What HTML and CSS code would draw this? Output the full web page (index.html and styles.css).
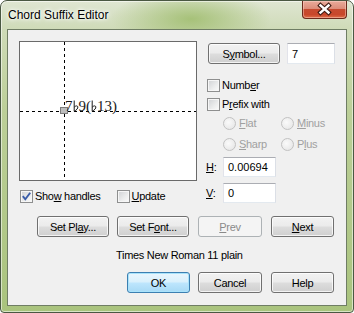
FILE: index.html
```html
<!DOCTYPE html>
<html lang="en">
<head>
  <meta charset="UTF-8">
  <title>Chord Suffix Editor</title>
  <link rel="stylesheet" href="styles.css">
</head>
<body>
  <div class="window">
    <!-- Title bar -->
    <div class="titlebar">
      <span class="title">Chord Suffix Editor</span>
      <div class="close-btn">
        <svg width="45" height="18" viewBox="0 0 45 18">
          <path d="M18.5 5.5 L26.5 12.5 M26.5 5.5 L18.5 12.5" stroke="#3e1c14" stroke-width="4.6" stroke-linecap="square" fill="none"/>
          <path d="M18.5 5.5 L26.5 12.5 M26.5 5.5 L18.5 12.5" stroke="#ffffff" stroke-width="2.4" stroke-linecap="square" fill="none"/>
        </svg>
      </div>
    </div>

    <!-- Dialog body -->
    <div class="client">
      <div class="top-section">
        <div class="left-col">
          <div class="preview">
            <div class="guide-v"></div>
            <div class="guide-h"></div>
            <div class="handle"></div>
            <div class="suffix">7<svg class="flat" width="6" height="12" viewBox="0 0 6 12"><path d="M1.2 0.5 V11.3 C3.5 10 5.2 8.4 4.8 6.8 C4.4 5.4 2.6 5.6 1.2 7.2" stroke="#1a1a1a" stroke-width="1" fill="none"/></svg>9(<svg class="flat" width="6" height="12" viewBox="0 0 6 12"><path d="M1.2 0.5 V11.3 C3.5 10 5.2 8.4 4.8 6.8 C4.4 5.4 2.6 5.6 1.2 7.2" stroke="#1a1a1a" stroke-width="1" fill="none"/></svg>13)</div>
          </div>
          <div class="checks-row">
            <div class="check">
              <span class="box">
                <svg width="11" height="11" viewBox="0 0 11 11"><path d="M1.8 5.2 L4.3 8.3 L9.2 1.8" stroke="#3a5ca8" stroke-width="1.9" fill="none"/></svg>
              </span>
              <span>Sho<u>w</u> handles</span>
            </div>
            <div class="check update-check">
              <span class="box"></span>
              <span><u>U</u>pdate</span>
            </div>
          </div>
        </div>

        <div class="right-col">
          <div class="symbol-row">
            <div class="btn symbol-btn">S<u>y</u>mbol...</div>
            <div class="field symbol-field">7</div>
          </div>
          <div class="check number-check">
            <span class="box"></span>
            <span>Numb<u>e</u>r</span>
          </div>
          <div class="check prefix-check">
            <span class="box"></span>
            <span>P<u>r</u>efix with</span>
          </div>
          <div class="radio-row first">
            <div class="radio"><span class="dot"></span><span><u>F</u>lat</span></div>
            <div class="radio"><span class="dot"></span><span><u>M</u>inus</span></div>
          </div>
          <div class="radio-row second">
            <div class="radio"><span class="dot"></span><span><u>S</u>harp</span></div>
            <div class="radio"><span class="dot"></span><span>P<u>l</u>us</span></div>
          </div>
          <div class="coord-row h-row">
            <span class="coord-label"><u>H</u>:</span>
            <div class="field coord-field">0.00694</div>
          </div>
          <div class="coord-row v-row">
            <span class="coord-label"><u>V</u>:</span>
            <div class="field coord-field">0</div>
          </div>
        </div>
      </div>

      <div class="btn-row nav-row">
        <div class="btn w72">Set Pl<u>a</u>y...</div>
        <div class="btn w72 gap8">Set F<u>o</u>nt...</div>
        <div class="btn w64 gap9 disabled"><u>P</u>rev</div>
        <div class="btn w63 gap9"><u>N</u>ext</div>
      </div>

      <div class="font-name">Times New Roman 11 plain</div>

      <div class="btn-row action-row">
        <div class="btn w63 default">OK</div>
        <div class="btn w64 gap8">Cancel</div>
        <div class="btn w63 gap9">Help</div>
      </div>
    </div>
  </div>
</body>
</html>
```

FILE: styles.css
```css
* {
  box-sizing: border-box;
}

body {
  margin: 0;
  background: #ffffff;
  font-family: "Liberation Sans", Arial, sans-serif;
  font-size: 11px;
  letter-spacing: -0.3px;
  color: #000;
  overflow: hidden;
}

u {
  text-decoration: underline;
  text-underline-offset: 1px;
}

/* Window frame */
.window {
  width: 354px;
  height: 313px;
  border: 1px solid #4a5842;
  border-radius: 7px 7px 4px 4px;
  padding: 0 6px 6px 6px;
  display: flex;
  flex-direction: column;
  background:
    radial-gradient(ellipse 80px 30px at 190px 18px, rgba(158, 188, 108, 0.85), rgba(158, 188, 108, 0)),
    linear-gradient(to bottom, #dfe6d2 0px, #cfdbb8 28px, #bccf98 110px, #a9c37d 313px);
  box-shadow: inset 0 0 0 1px rgba(255, 255, 255, 0.55);
}

.titlebar {
  height: 28px;
  display: flex;
  align-items: flex-start;
}

.title {
  padding: 7px 0 0 1px;
  font-size: 12px;
  line-height: 15px;
  letter-spacing: 0;
  color: #000;
  text-shadow: 0 0 6px #fff, 0 0 4px #fff, 0 0 2px #fff;
}

.close-btn {
  margin-left: auto;
  width: 45px;
  height: 18px;
  border: 1px solid #6b2a1c;
  border-top: none;
  border-radius: 0 0 4px 4px;
  background: linear-gradient(to bottom, #e9ab9b 0%, #dc8d7a 45%, #c64a2f 50%, #c8472b 80%, #df6f48 100%);
  box-shadow: inset 0 0 0 1px rgba(255, 220, 210, 0.45);
}

.close-btn svg {
  display: block;
  margin: -1px 0 0 -1px;
}

/* Client area */
.client {
  height: 277px;
  border: 1px solid #6f7d64;
  background: #f0f0f0;
  padding: 11px 0 0 11px;
  display: flex;
  flex-direction: column;
}

.top-section {
  display: flex;
  gap: 10px;
}

.left-col {
  width: 178px;
}

.preview {
  position: relative;
  width: 178px;
  height: 140px;
  border: 1px solid #6a6a6a;
  background: #ffffff;
  overflow: hidden;
}

.guide-v {
  position: absolute;
  left: 44px;
  top: 0;
  width: 1px;
  height: 100%;
  background: repeating-linear-gradient(to bottom, #000 0 3px, transparent 3px 6px);
}

.guide-h {
  position: absolute;
  left: 0;
  top: 69px;
  width: 100%;
  height: 1px;
  background: repeating-linear-gradient(to right, #000 0 3px, transparent 3px 6px);
}

.handle {
  position: absolute;
  left: 40px;
  top: 65px;
  width: 8px;
  height: 7px;
  border: 1px solid #7c7c7c;
  background: #bdbdbd;
}

.suffix {
  position: absolute;
  left: 45px;
  top: 57px;
  font-family: "Liberation Serif", "DejaVu Serif", serif;
  font-size: 15px;
  line-height: 15px;
  letter-spacing: 0;
  color: #1a1a1a;
}

.suffix .flat {
  vertical-align: -1px;
}

.checks-row {
  margin-top: 9px;
  display: flex;
  padding-left: 1px;
}

.check {
  display: flex;
  align-items: center;
  gap: 2px;
  height: 13px;
  line-height: 13px;
}

.update-check {
  margin-left: 16px;
}

.box {
  width: 13px;
  height: 13px;
  flex: none;
  border: 1px solid #8e8f8f;
  background: linear-gradient(135deg, #cfd1d4 0%, #eceded 60%, #fbfbfb 100%);
  box-shadow: inset 0 0 0 1px #f6f6f6;
}

.box svg {
  display: block;
}

/* Right column */
.right-col {
  padding-top: 2px;
  width: 138px;
}

.symbol-row {
  display: flex;
  height: 21px;
}

.symbol-btn {
  width: 72px;
  margin-left: 1px;
}

.symbol-field {
  width: 48px;
  margin-left: 7px;
  height: 21px;
}

.number-check {
  margin-top: 15px;
}

.prefix-check {
  margin-top: 6px;
}

.radio-row {
  display: flex;
  padding-left: 16px;
  height: 13px;
  color: #a0a0a0;
}

.radio-row.first {
  margin-top: 6px;
}

.radio-row.second {
  margin-top: 8px;
}

.radio {
  width: 58px;
  display: flex;
  align-items: center;
  gap: 3px;
  line-height: 13px;
}

.dot {
  width: 13px;
  height: 13px;
  flex: none;
  border-radius: 50%;
  border: 1px solid #c2c2c2;
  background: radial-gradient(circle at 40% 40%, #fafafa 0%, #ececec 60%, #e2e2e2 100%);
}

.coord-row {
  display: flex;
  align-items: center;
  height: 20px;
}

.h-row {
  margin-top: 6px;
}

.v-row {
  margin-top: 6px;
}

.coord-label {
  width: 17px;
  margin-left: -1px;
}

.coord-field {
  width: 53px;
  height: 20px;
}

.field {
  background: #ffffff;
  border: 1px solid;
  border-color: #abadb3 #dbdfe6 #e3e9ef #e2e3ea;
  padding-left: 4px;
  display: flex;
  align-items: center;
  letter-spacing: 0;
}

/* Push buttons */
.btn {
  height: 21px;
  border: 1px solid #707070;
  border-radius: 3px;
  background: linear-gradient(to bottom, #f2f2f2 0%, #ebebeb 48%, #dddddd 52%, #cfcfcf 100%);
  box-shadow: inset 0 0 0 1px rgba(255, 255, 255, 0.75);
  display: flex;
  align-items: center;
  justify-content: center;
}

.btn.disabled {
  border-color: #adb2b5;
  background: #f4f4f4;
  color: #8a8a8a;
  box-shadow: none;
}

.btn.default {
  border-color: #3c7fb1;
  background: linear-gradient(to bottom, #eaf6fd 0%, #d9f0fc 48%, #bee6fd 52%, #a7d9f5 100%);
  box-shadow: inset 0 0 0 1px #a9e3fb;
}

.w72 { width: 72px; }
.w64 { width: 64px; }
.w63 { width: 63px; }
.gap8 { margin-left: 8px; }
.gap9 { margin-left: 9px; }

.btn-row {
  display: flex;
}

.nav-row {
  margin-top: 13px;
  padding-left: 18px;
}

.font-name {
  margin-top: 12px;
  margin-left: 97px;
  height: 13px;
  line-height: 13px;
}

.action-row {
  margin-top: 10px;
  padding-left: 108px;
}
```
